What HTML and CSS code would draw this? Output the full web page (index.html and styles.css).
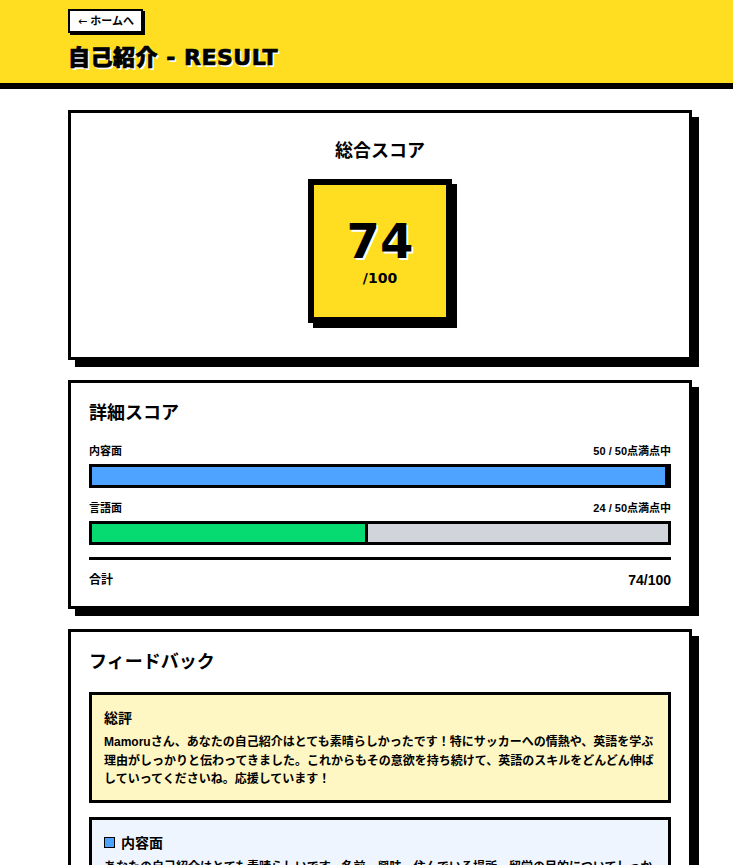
FILE: index.html
```html
<!DOCTYPE html>
<html lang="ja">
<head>
    <meta charset="UTF-8">
    <meta name="viewport" content="width=device-width, initial-scale=1.0">
    <title>自己紹介 - RESULT</title>
    <link rel="stylesheet" href="styles.css">
</head>
<body>
    <header class="top">
        <div class="top-inner">
            <a class="back-btn" href="#"><span class="arrow">←</span> ホームへ</a>
            <h1 class="page-title">自己紹介 - RESULT</h1>
        </div>
    </header>

    <main class="wrap">
        <!-- 総合スコア -->
        <section class="card card-total">
            <h2 class="card-title">総合スコア</h2>
            <div class="score-box">
                <div class="score-num">74</div>
                <div class="score-max">/100</div>
            </div>
        </section>

        <!-- 詳細スコア -->
        <section class="card">
            <h2 class="card-title">詳細スコア</h2>
            <div class="row">
                <div class="row-head">
                    <span>内容面</span>
                    <span>50 / 50点満点中</span>
                </div>
                <div class="bar"><div class="fill fill-blue" style="width: 100%"></div></div>
            </div>
            <div class="row">
                <div class="row-head">
                    <span>言語面</span>
                    <span>24 / 50点満点中</span>
                </div>
                <div class="bar"><div class="fill fill-green" style="width: 48%"></div></div>
            </div>
            <div class="sum">
                <span>合計</span>
                <span class="sum-val">74/100</span>
            </div>
        </section>

        <!-- フィードバック -->
        <section class="card">
            <h2 class="card-title">フィードバック</h2>
            <div class="note note-yellow">
                <h3>総評</h3>
                <p>Mamoruさん、あなたの自己紹介はとても素晴らしかったです！特にサッカーへの情熱や、英語を学ぶ理由がしっかりと伝わってきました。これからもその意欲を持ち続けて、英語のスキルをどんどん伸ばしていってくださいね。応援しています！</p>
            </div>
            <div class="note note-blue">
                <h3><i class="mark"></i>内容面</h3>
                <p>あなたの自己紹介はとても素晴らしいです。名前、興味、住んでいる場所、留学の目的についてしっかりと話せていて、とても分かりやすかったです。</p>
            </div>
        </section>
    </main>
</body>
</html>
```

FILE: styles.css
```css
body, h1, h2, h3, p, div, span {
    margin: 0;
    padding: 0;
}
body {
    background-color: #fff;
    color: #000;
    font-family: "Liberation Sans", "Noto Sans CJK JP", sans-serif;
    font-weight: 700;
}
.top {
    background-color: #ffde21;
    border-bottom: 6px solid #000;
}
.top-inner {
    width: 624px;
    margin-left: 68px;
    padding: 9px 0 11px;
}
.back-btn {
    display: inline-block;
    height: 20px;
    line-height: 20px;
    padding: 0 7px 0 8px;
    border: 2px solid #000;
    background-color: #fff;
    box-shadow: 2px 2px 0 #000;
    color: #000;
    font-size: 11px;
    text-decoration: none;
}
.back-btn .arrow {
    font-family: "DejaVu Sans", sans-serif;
    font-weight: 400;
}
/* 見出しとスコアは太めの書体で */
.page-title,
.score-box {
    font-family: "DejaVu Sans", "Noto Sans CJK JP", sans-serif;
    font-weight: 900;
}
.page-title {
    margin-top: 10px;
    font-size: 22px;
    line-height: 29px;
    letter-spacing: 0.5px;
    -webkit-text-stroke: 0.7px #000;
    text-shadow: 2px 2px 0 #fff;
}
.wrap {
    width: 624px;
    margin-left: 68px;
    padding: 21px 0 40px;
}
.card {
    border: 3px solid #000;
    background-color: #fff;
    box-shadow: 7px 7px 0 #000;
    padding: 19px 18px 18px;
    margin-bottom: 20px;
}
.card-title {
    font-size: 18px;
    line-height: 23px;
    margin-bottom: 18px;
}
.card-total {
    padding: 27px 18px 34px;
}
.card-total .card-title {
    text-align: center;
    margin-bottom: 16px;
}
.score-box {
    box-sizing: border-box;
    width: 144px;
    height: 144px;
    margin: 0 auto;
    padding-bottom: 1px;
    border: 6px solid #000;
    background-color: #ffde21;
    box-shadow: 5px 5px 0 #000;
    display: flex;
    flex-direction: column;
    align-items: center;
    justify-content: center;
}
.score-num {
    font-size: 48px;
    line-height: 48px;
    text-shadow: 2px 2px 0 #fff;
    margin-bottom: 6px;
}
.score-max {
    font-size: 14px;
    line-height: 14px;
}
.row {
    margin-top: 12px;
}
.row:first-of-type {
    margin-top: 0;
}
.row-head {
    display: flex;
    justify-content: space-between;
    font-size: 11px;
    line-height: 16px;
    margin-bottom: 5px;
}
.bar {
    height: 18px;
    border: 3px solid #000;
    background-color: #d1d5db;
}
.fill {
    height: 100%;
    box-sizing: border-box;
    border-right: 3px solid #000;
}
.fill-blue {
    background-color: #4da3ff;
}
.fill-green {
    background-color: #06db72;
}
.sum {
    display: flex;
    justify-content: space-between;
    align-items: center;
    margin-top: 12px;
    padding-top: 12px;
    border-top: 3px solid #000;
    font-size: 12px;
    line-height: 16px;
}
.sum-val {
    font-size: 14px;
}
.note {
    border: 3px solid #000;
    padding: 12px 10px 11px 12px;
    margin-bottom: 14px;
}
.note h3 {
    font-size: 14px;
    line-height: 22px;
    display: flex;
    align-items: center;
}
.note p {
    margin-top: 4px;
    font-size: 12px;
    line-height: 18.5px;
}
.note-yellow {
    background-color: #fef7c3;
}
.note-blue {
    background-color: #eef5ff;
}
.mark {
    display: inline-block;
    width: 9px;
    height: 9px;
    border: 1.5px solid #000;
    background-color: #4da3ff;
    margin-right: 6px;
}
```
